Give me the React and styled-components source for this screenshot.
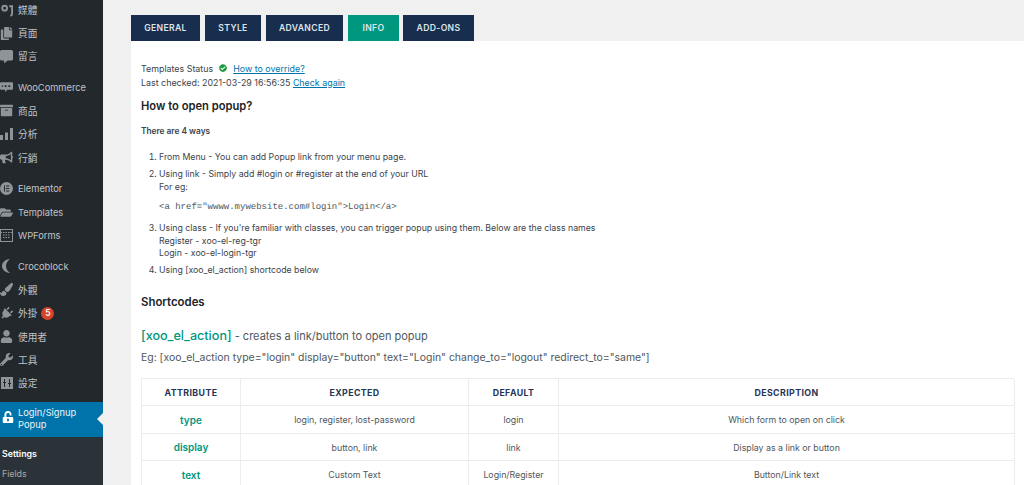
import React from "react";
import styled, { createGlobalStyle } from "styled-components";
import {
  FaCopy,
  FaCommentAlt,
  FaArchive,
  FaBullhorn,
  FaFolderOpen,
  FaPaintBrush,
  FaPlug,
  FaUser,
  FaWrench,
  FaUnlockAlt,
  FaCheckCircle,
} from "react-icons/fa";

const GlobalStyle = createGlobalStyle`
  html, body { margin: 0; padding: 0; height: 100%; overflow: hidden; background: #f0f0f0; }
  body { font-family: Inter, "Noto Sans CJK TC", sans-serif; }
  * { box-sizing: border-box; }
`;

const Page = styled.div`
  display: flex;
  width: 1024px;
  height: 485px;
  overflow: hidden;
`;

const Sidebar = styled.nav`
  width: 103px;
  flex-shrink: 0;
  height: 485px;
  background: #23282d;
  overflow: hidden;
  font-family: Inter, "Noto Sans CJK TC", sans-serif;
`;

const Menu = styled.div`
  margin-top: -2px;
  display: flex;
  flex-direction: column;
  gap: 7.6px;
`;

const Group = styled.div`
  display: flex;
  flex-direction: column;
`;

const Item = styled.div`
  display: flex;
  align-items: center;
  height: 23.4px;
  color: #c0c4c8;
  font-size: ${(p) => (p.$cjk ? 9.7 : 9.3)}px;
  white-space: nowrap;
`;

const IconSlot = styled.span`
  width: 18px;
  flex-shrink: 0;
  display: flex;
  align-items: center;
  justify-content: flex-end;
  padding-right: 5px;
  overflow: hidden;
  color: #8f9499;
  font-size: 13px;
`;

const TiltedIcon = styled.span`
  display: flex;
  transform: rotate(45deg);
`;

const Badge = styled.span`
  width: 13px;
  height: 13px;
  margin-left: 4px;
  border-radius: 50%;
  background: #d6452a;
  color: #fff;
  font-size: 8.5px;
  font-weight: 600;
  display: flex;
  align-items: center;
  justify-content: center;
`;

const ActiveItem = styled.div`
  position: relative;
  margin-top: 7px;
  height: 35px;
  padding-top: 5px;
  display: flex;
  background: #0073aa;
  color: #eef4f8;
  font-size: 9.3px;
  line-height: 12px;
`;

const ActiveIcon = styled(IconSlot)`
  color: #fff;
  height: 19px;
  padding-right: 4px;
  font-size: 12px;
`;

const Arrow = styled.span`
  position: absolute;
  right: 0;
  top: 11px;
  border: 6px solid transparent;
  border-right-color: #f0f0f0;
  border-left-width: 0;
`;

const SubMenu = styled.div`
  height: 60px;
  padding: 7px 0 0 2px;
  background: #2c3338;
`;

const SubItem = styled.div`
  height: 20px;
  line-height: 20px;
  font-size: 8.8px;
  font-weight: ${(p) => (p.$current ? 600 : 400)};
  color: ${(p) => (p.$current ? "#fff" : "#a4a9ae")};
`;

const Main = styled.main`
  flex: 1;
  padding: 15px 0 0 28px;
  min-width: 0;
`;

const Tabs = styled.div`
  display: flex;
  height: 26px;
`;

const Tab = styled.div`
  width: ${(p) => p.$w}px;
  margin-right: ${(p) => p.$gap}px;
  display: flex;
  align-items: center;
  justify-content: center;
  background: ${(p) => (p.$active ? "#00977f" : "#172e4e")};
  color: #dfe4ea;
  font-size: 8.6px;
  font-weight: 600;
  letter-spacing: 0.35px;
`;

const Panel = styled.div`
  height: 444px;
  background: #fff;
  padding: 20px 10px 0 10px;
  color: #3c434a;
  font-size: 8.75px;
`;

const StatusLine = styled.div`
  display: flex;
  align-items: center;
  height: 14px;
  font-size: 8.9px;
  white-space: pre;
`;

const Check = styled.span`
  display: flex;
  margin: 0 6px 0 6px;
  color: #1c9b3c;
  font-size: 8px;
`;

const TextLink = styled.a`
  color: #0073aa;
  text-decoration: underline;
`;

const Title = styled.h3`
  margin: 8px 0 0;
  height: 18px;
  line-height: 18px;
  font-size: 11.2px;
  font-weight: 600;
  color: #1d2327;
`;

const Ways = styled.p`
  margin: 10px 0 0;
  height: 12px;
  line-height: 12px;
  font-size: 8.3px;
  font-weight: 600;
`;

const Steps = styled.ol`
  margin: 14px 0 0;
  padding: 0 0 0 18px;
  line-height: 12.4px;
`;

const Step = styled.li`
  margin-bottom: ${(p) => p.$mb}px;
`;

const Code = styled.code`
  display: block;
  margin: 8px 0 9px;
  height: 12px;
  line-height: 12px;
  font-family: "Liberation Mono", monospace;
  font-size: 9px;
  text-rendering: geometricPrecision;
  color: #50575e;
`;

const SectionTitle = styled.h3`
  margin: 16px 0 0;
  height: 18px;
  line-height: 18px;
  font-size: 11.4px;
  font-weight: 600;
  color: #1d2327;
`;

const Lead = styled.p`
  margin: 16px 0 0;
  height: 18px;
  line-height: 18px;
  font-size: 11px;
  color: #50575e;
`;

const Shortcode = styled.span`
  color: #00977f;
  font-size: 12.6px;
  font-weight: 500;
`;

const Example = styled.p`
  margin: 4px 0 0;
  height: 18px;
  line-height: 18px;
  font-size: 10.45px;
  color: #50575e;
`;

const Table = styled.div`
  margin-top: 11px;
  width: 873px;
  display: grid;
  grid-template-columns: 99px 228px 90px 456px;
  grid-auto-rows: 27.5px;
  border-top: 1px solid #ececec;
  border-left: 1px solid #ececec;
`;

const Cell = styled.div`
  display: flex;
  align-items: center;
  justify-content: center;
  border-right: 1px solid #ececec;
  border-bottom: 1px solid #ececec;
  font-size: 8.8px;
  color: #50575e;
`;

const HeadCell = styled(Cell)`
  font-size: 8.8px;
  font-weight: 700;
  letter-spacing: 0.4px;
  color: #1f3557;
`;

const AttrCell = styled(Cell)`
  font-size: 10px;
  font-weight: 600;
  color: #00977f;
`;

const MediaIcon = () => (
  <svg width="14" height="14" viewBox="0 0 14 14" fill="none" stroke="currentColor" strokeWidth="2">
    <circle cx="5" cy="5" r="2.6" />
    <path d="M10 3h3v8c0 1-1 2-2 2" />
  </svg>
);

const WooIcon = () => (
  <svg width="14" height="12" viewBox="0 0 14 12" fill="currentColor">
    <path
      fillRule="evenodd"
      d="M1 1h12a1 1 0 0 1 1 1v6a1 1 0 0 1-1 1H8l-2.500 2.500V9H1a1 1 0 0 1-1-1V2a1 1 0 0 1 1-1zM2 4v2h1V4zm3 0v2h2V4zm4 0v2h2V4z"
    />
  </svg>
);

const BarsIcon = () => (
  <svg width="13" height="12" viewBox="0 0 13 12" fill="currentColor">
    <rect x="0" y="7" width="3" height="5" />
    <rect x="5" y="4.500" width="3" height="7.500" />
    <rect x="10" y="0" width="3" height="12" />
  </svg>
);

const ElementorIcon = () => (
  <svg width="13" height="13" viewBox="0 0 13 13" fill="currentColor">
    <path fillRule="evenodd" d="M6.500 0a6.500 6.500 0 1 0 0 13 6.500 6.500 0 0 0 0-13zM4 3.500h1v6H4zM6 3.500h3.200v1H6zM6 6h3.200v1H6zM6 8.500h3.200v1H6z" />
  </svg>
);

const FormsIcon = () => (
  <svg width="13" height="13" viewBox="0 0 13 13" fill="none" stroke="currentColor">
    <rect x="0.500" y="0.500" width="12" height="12" />
    <path d="M0.500 3.500h12M3 6h7M3 8.500h7" strokeDasharray="1.500 1" />
  </svg>
);

const CrocoIcon = () => (
  <svg width="12" height="14" viewBox="0 0 12 14" fill="currentColor">
    <path d="M9 0C4 .5 1 3.500 1 7s3 6.500 8 7C6.500 12 5 10 5 7s1.500-5 4-7z" />
  </svg>
);

const SlidersIcon = () => (
  <svg width="12" height="12" viewBox="0 0 12 12" fill="currentColor">
    <path fillRule="evenodd" d="M0 0h12v12H0zM3 2v3H2v1h1v4h1V6h1V5H4V2zm5 0v4H7v1h1v3h1V7h1V6H9V2z" />
  </svg>
);

const groups = [
  [
    { icon: <MediaIcon />, label: "媒體", cjk: true },
    { icon: <FaCopy />, label: "頁面", cjk: true },
    { icon: <FaCommentAlt />, label: "留言", cjk: true },
  ],
  [
    { icon: <WooIcon />, label: "WooCommerce" },
    { icon: <FaArchive />, label: "商品", cjk: true },
    { icon: <BarsIcon />, label: "分析", cjk: true },
    { icon: <FaBullhorn />, label: "行銷", cjk: true },
  ],
  [
    { icon: <ElementorIcon />, label: "Elementor" },
    { icon: <FaFolderOpen />, label: "Templates" },
    { icon: <FormsIcon />, label: "WPForms" },
  ],
  [
    { icon: <CrocoIcon />, label: "Crocoblock" },
    { icon: <FaPaintBrush />, label: "外觀", cjk: true },
    { icon: <TiltedIcon><FaPlug /></TiltedIcon>, label: "外掛", cjk: true, badge: 5 },
    { icon: <FaUser />, label: "使用者", cjk: true },
    { icon: <FaWrench />, label: "工具", cjk: true },
    { icon: <SlidersIcon />, label: "設定", cjk: true },
  ],
];

const tabs = [
  { label: "GENERAL", w: 69, gap: 5 },
  { label: "STYLE", w: 56, gap: 5 },
  { label: "ADVANCED", w: 77, gap: 5 },
  { label: "INFO", w: 51, gap: 4 },
  { label: "ADD-ONS", w: 71, gap: 0 },
];

const rows = [
  ["type", "login, register, lost-password", "login", "Which form to open on click"],
  ["display", "button, link", "link", "Display as a link or button"],
  ["text", "Custom Text", "Login/Register", "Button/Link text"],
];

export default function App() {
  return (
    <Page>
      <GlobalStyle />
      <Sidebar>
        <Menu>
          {groups.map((group, i) => (
            <Group key={i}>
              {group.map((item) => (
                <Item key={item.label} $cjk={item.cjk}>
                  <IconSlot>{item.icon}</IconSlot>
                  {item.label}
                  {item.badge && <Badge>{item.badge}</Badge>}
                </Item>
              ))}
            </Group>
          ))}
        </Menu>
        <ActiveItem>
          <ActiveIcon>
            <FaUnlockAlt />
          </ActiveIcon>
          <span>
            Login/Signup
            <br />
            Popup
          </span>
          <Arrow />
        </ActiveItem>
        <SubMenu>
          <SubItem $current>Settings</SubItem>
          <SubItem>Fields</SubItem>
        </SubMenu>
      </Sidebar>
      <Main>
        <Tabs>
          {tabs.map((t) => (
            <Tab key={t.label} $w={t.w} $gap={t.gap} $active={t.label === "INFO"}>
              {t.label}
            </Tab>
          ))}
        </Tabs>
        <Panel>
          <StatusLine>
            Templates Status
            <Check>
              <FaCheckCircle />
            </Check>
            <TextLink>How to override?</TextLink>
          </StatusLine>
          <StatusLine>
            Last checked: 2021-03-29 16:56:35 <TextLink>Check again</TextLink>
          </StatusLine>
          <Title>How to open popup?</Title>
          <Ways>There are 4 ways</Ways>
          <Steps>
            <Step $mb={5}>From Menu - You can add Popup link from your menu page.</Step>
            <Step $mb={0}>
              Using link - Simply add #login or #register at the end of your URL
              <br />
              For eg:
              <Code>{'<a href="wwww.mywebsite.com#login">Login</a>'}</Code>
            </Step>
            <Step $mb={5}>
              Using class - If you're familiar with classes, you can trigger popup using them. Below are the class names
              <br />
              Register - xoo-el-reg-tgr
              <br />
              Login - xoo-el-login-tgr
            </Step>
            <Step $mb={0}>Using [xoo_el_action] shortcode below</Step>
          </Steps>
          <SectionTitle>Shortcodes</SectionTitle>
          <Lead>
            <Shortcode>[xoo_el_action]</Shortcode> - creates a link/button to open popup
          </Lead>
          <Example>
            Eg: [xoo_el_action type="login" display="button" text="Login" change_to="logout" redirect_to="same"]
          </Example>
          <Table>
            <HeadCell>ATTRIBUTE</HeadCell>
            <HeadCell>EXPECTED</HeadCell>
            <HeadCell>DEFAULT</HeadCell>
            <HeadCell>DESCRIPTION</HeadCell>
            {rows.map((r) => (
              <React.Fragment key={r[0]}>
                <AttrCell>{r[0]}</AttrCell>
                <Cell>{r[1]}</Cell>
                <Cell>{r[2]}</Cell>
                <Cell>{r[3]}</Cell>
              </React.Fragment>
            ))}
          </Table>
        </Panel>
      </Main>
    </Page>
  );
}
